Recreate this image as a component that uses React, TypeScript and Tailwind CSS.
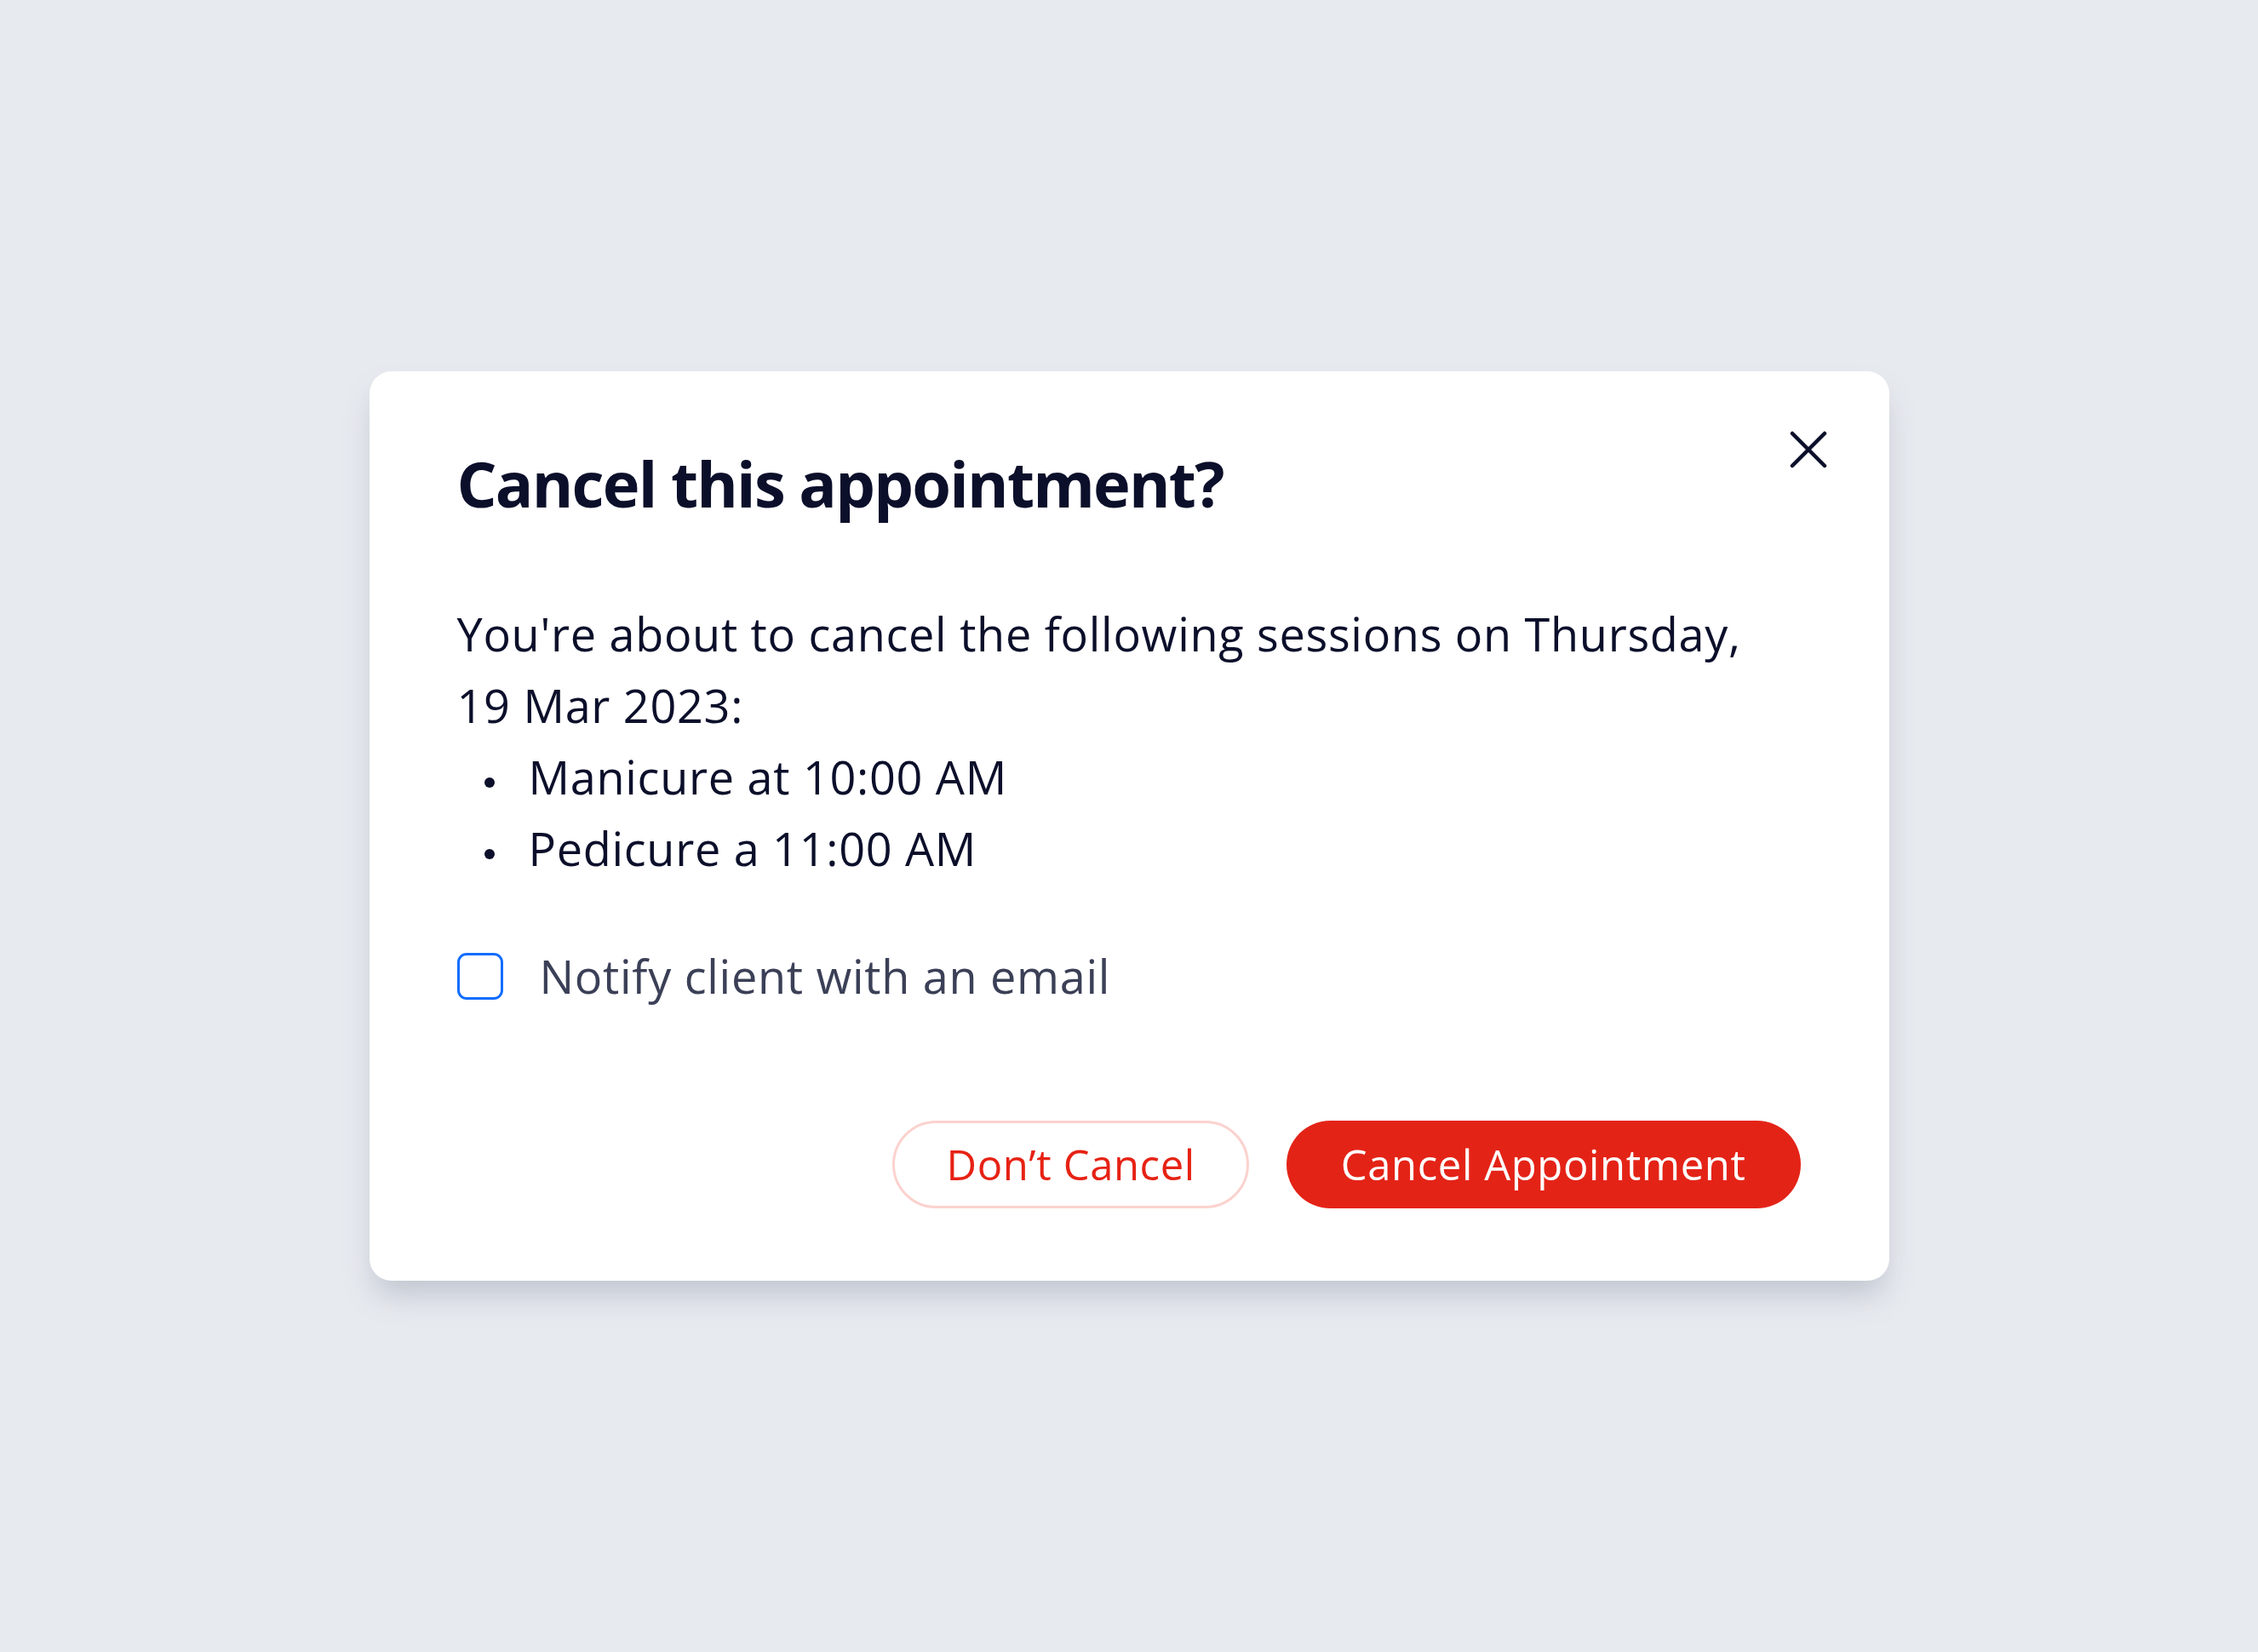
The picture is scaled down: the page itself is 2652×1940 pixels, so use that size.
import React from "react";

const sessions = ["Manicure at 10:00 AM", "Pedicure a 11:00 AM"];

const CloseIcon: React.FC = () => (
  <svg width="44" height="44" viewBox="0 0 44 44" fill="none">
    <path d="M3 3L41 41M41 3L3 41" stroke="#0b0f2a" strokeWidth="4.5" strokeLinecap="round" />
  </svg>
);

export default function App() {
  return (
    <div
      className="min-h-screen w-full flex items-center justify-center bg-[#e7eaef]"
      style={{ fontFamily: '"Open Sans", "Liberation Sans", sans-serif' }}
    >
      <div className="relative w-[1785px] bg-white rounded-[26px] pl-[103px] pr-[104px] pt-[88px] pb-[85px] shadow-[0_22px_34px_-6px_rgba(120,130,150,0.35)]">
        {/* close button sits over the top-right corner */}
        <button className="absolute top-[70px] right-[73px] w-[44px] h-[44px] flex items-center justify-center">
          <CloseIcon />
        </button>

        <h1 className="text-[74px] leading-[88px] font-bold text-[#0b0f2a] tracking-[-1.8px]">
          Cancel this appointment?
        </h1>

        <div className="mt-[90px] text-[54px] leading-[84px] text-[#0b0f2a] tracking-[0.7px]">
          <p>
            You're about to cancel the following sessions on Thursday,
            <br />
            19 Mar 2023:
          </p>
          <ul>
            {sessions.map((s) => (
              <li key={s} className="flex items-center">
                <span className="ml-[32px] mr-[40px] mt-[14px] w-[12px] h-[12px] rounded-full bg-[#0b0f2a]" />
                <span>{s}</span>
              </li>
            ))}
          </ul>
        </div>

        <label className="mt-[66px] flex items-center gap-[43px] cursor-pointer">
          <span className="w-[54px] h-[55px] rounded-[11px] border-[3px] border-[#116dff] shrink-0" />
          <span className="text-[54px] leading-[84px] text-[#3b4057] tracking-[0.7px]">
            Notify client with an email
          </span>
        </label>

        <div className="mt-[128px] flex justify-end gap-[44px]">
          <button className="h-[103px] px-[60px] rounded-full border-[3px] border-[#fbd2ce] text-[#e62214] text-[49px] leading-none tracking-[0.6px]">
            Don’t Cancel
          </button>
          <button className="h-[103px] px-[64px] rounded-full bg-[#e42317] text-white text-[49px] leading-none tracking-[0.6px]">
            Cancel Appointment
          </button>
        </div>
      </div>
    </div>
  );
}
